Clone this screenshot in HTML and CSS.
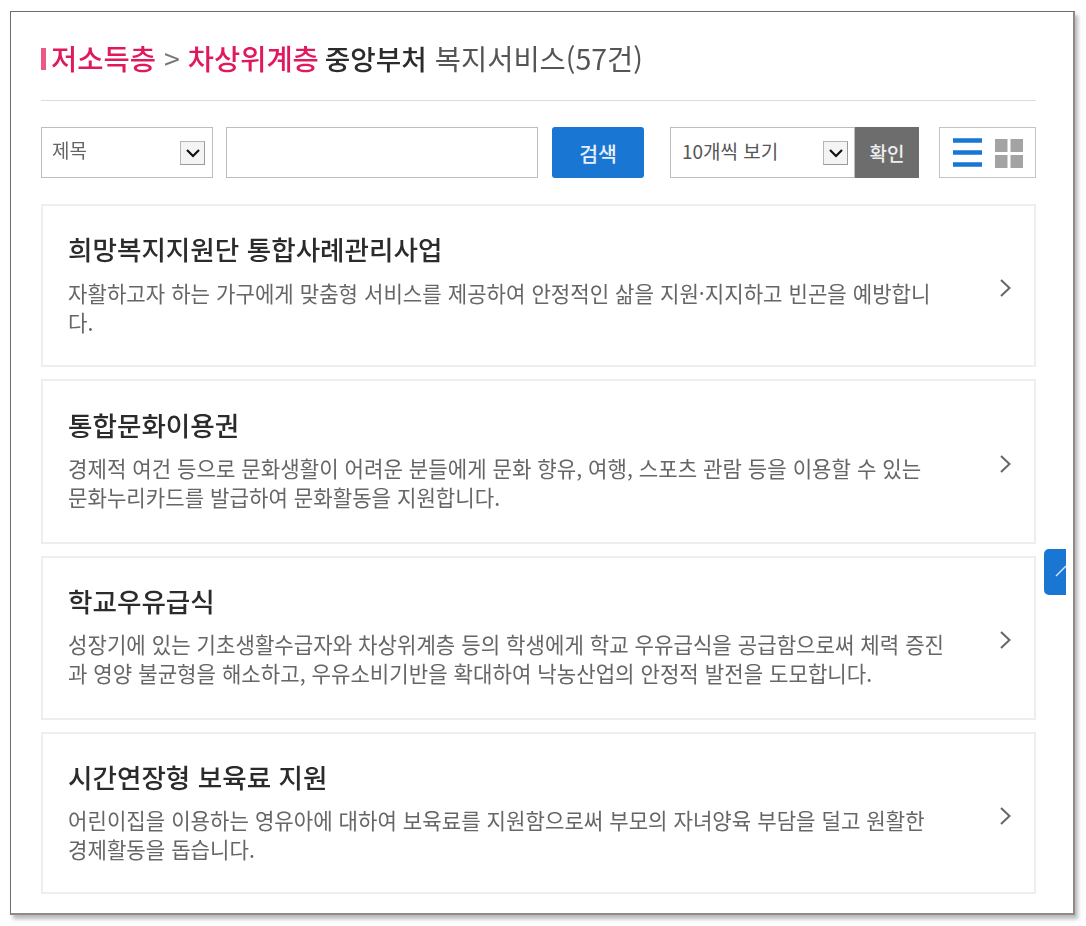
FILE: index.html
```html
<!DOCTYPE html>
<html lang="ko">
<head>
<meta charset="utf-8">
<title>복지서비스</title>
<link rel="stylesheet" href="styles.css">
</head>
<body>
<main class="window">
  <h1 class="heading"><span class="bar"></span><span class="pink">저소득층</span> <span class="gt">&gt;</span> <span class="pink">차상위계층</span> <span class="dark">중앙부처</span> <span class="light">복지서비스(57건)</span></h1>
  <form class="toolbar">
    <div class="select select-field">
      <span>제목</span>
      <span class="arrow"><svg width="14" height="10" viewBox="0 0 14 10"><path d="M1 2l6 6 6-6" fill="none" stroke="#111" stroke-width="2.200"/></svg></span>
    </div>
    <input class="search-input" type="text" aria-label="검색어">
    <button class="search-btn" type="button">검색</button>
    <div class="pager">
      <div class="select select-count">
        <span>10개씩 보기</span>
        <span class="arrow"><svg width="14" height="10" viewBox="0 0 14 10"><path d="M1 2l6 6 6-6" fill="none" stroke="#111" stroke-width="2.200"/></svg></span>
      </div>
      <button class="ok-btn" type="button">확인</button>
    </div>
    <div class="views">
      <svg class="icon-list" width="29" height="29" viewBox="0 0 29 29"><path d="M0 2.500h29M0 14.500h29M0 26.500h29" stroke="#1976d2" stroke-width="4.500"/></svg>
      <svg class="icon-grid" width="28" height="29" viewBox="0 0 28 29"><path d="M0 0h12.500v13H0zM15.500 0h12.500v13H15.500zM0 16h12.500v13H0zM15.500 16h12.500v13H15.500z" fill="#a3a3a3"/></svg>
    </div>
  </form>
  <ul class="cards">
    <li class="card card-a">
      <div class="card-body">
        <h2>희망복지지원단 통합사례관리사업</h2>
        <p>자활하고자 하는 가구에게 맞춤형 서비스를 제공하여 안정적인 삶을 지원·지지하고 빈곤을 예방합니<br>다.</p>
      </div>
      <svg class="chev" width="13" height="20" viewBox="0 0 13 20"><path d="M2 2l8.500 8-8.500 8" fill="none" stroke="#666" stroke-width="2"/></svg>
    </li>
    <li class="card card-b">
      <div class="card-body">
        <h2>통합문화이용권</h2>
        <p>경제적 여건 등으로 문화생활이 어려운 분들에게 문화 향유, 여행, 스포츠 관람 등을 이용할 수 있는<br>문화누리카드를 발급하여 문화활동을 지원합니다.</p>
      </div>
      <svg class="chev" width="13" height="20" viewBox="0 0 13 20"><path d="M2 2l8.500 8-8.500 8" fill="none" stroke="#666" stroke-width="2"/></svg>
    </li>
    <li class="card card-c">
      <div class="card-body">
        <h2>학교우유급식</h2>
        <p>성장기에 있는 기초생활수급자와 차상위계층 등의 학생에게 학교 우유급식을 공급함으로써 체력 증진<br>과 영양 불균형을 해소하고, 우유소비기반을 확대하여 낙농산업의 안정적 발전을 도모합니다.</p>
      </div>
      <svg class="chev" width="13" height="20" viewBox="0 0 13 20"><path d="M2 2l8.500 8-8.500 8" fill="none" stroke="#666" stroke-width="2"/></svg>
    </li>
    <li class="card card-d">
      <div class="card-body">
        <h2>시간연장형 보육료 지원</h2>
        <p>어린이집을 이용하는 영유아에 대하여 보육료를 지원함으로써 부모의 자녀양육 부담을 덜고 원활한<br>경제활동을 돕습니다.</p>
      </div>
      <svg class="chev" width="13" height="20" viewBox="0 0 13 20"><path d="M2 2l8.500 8-8.500 8" fill="none" stroke="#666" stroke-width="2"/></svg>
    </li>
  </ul>
  <a class="top-btn" href="#" aria-label="맨 위로"><svg width="22" height="46" viewBox="0 0 22 46"><path d="M12 27l10-10" fill="none" stroke="#d5e6f7" stroke-width="1.500"/></svg></a>
</main>
</body>
</html>
```
FILE: styles.css
```css
* { box-sizing: border-box; }
html, body { margin: 0; padding: 0; background: #fff; }
body {
  width: 1086px;
  height: 926px;
  padding: 11px 0 0 10px;
  font-family: "Noto Sans CJK KR", "Noto Sans", sans-serif;
  overflow: hidden;
}
.window {
  position: relative;
  width: 1065px;
  height: 904px;
  padding: 0 37px 0 30px;
  border-style: solid;
  border-width: 1px 2px 2px 1px;
  border-color: #6e6e6e #8c8c8c #8c8c8c #6e6e6e;
  box-shadow: 3px 4px 4px rgba(0, 0, 0, .28);
  background: #fff;
  filter: blur(.35px);
}
.heading {
  display: flex;
  align-items: center;
  gap: 8px;
  height: 89px;
  margin: 0;
  padding-top: 3px;
  border-bottom: 1px solid #dcdcdc;
  font-size: 28.5px;
  font-weight: 400;
  white-space: nowrap;
}
.bar { width: 5px; height: 22px; margin: 3px -3px 0 0; background: #ec5a84; }
.pink { color: #e0195f; font-weight: 500; }
.gt { color: #777; font-weight: 400; }
.dark { margin-left: -2px; color: #2b2b2b; font-size: 27.7px; font-weight: 500; }
.light { color: #555; }
.toolbar { display: flex; align-items: stretch; height: 51px; margin-top: 26px; }
.select {
  display: flex;
  align-items: center;
  justify-content: space-between;
  height: 51px;
  border: 1px solid #bdbdbd;
  background: #fff;
  color: #666;
  font-size: 19px;
}
.select-field { width: 172px; padding: 0 7px 0 10px; }
.select-field span:first-child { transform: translateY(-3px); }
.select-count { width: 185px; padding: 0 6px 0 11px; color: #555; }
.select-count span:first-child { transform: translateY(-2px); }
.arrow {
  display: flex;
  align-items: center;
  justify-content: center;
  width: 25px;
  height: 24px;
  border: 1px solid #b5b5b5;
  border-right-color: #9a9a9a;
  border-bottom-color: #9a9a9a;
  background: #f4f4f4;
}
.search-input { width: 312px; height: 51px; margin-left: 13px; border: 1px solid #bdbdbd; background: #fff; outline: 0; }
.search-btn {
  width: 92px;
  height: 51px;
  margin-left: 14px;
  border: 0;
  border-radius: 3px;
  background: #1976d2;
  color: #e8f1fb;
  font: 500 20.5px "Noto Sans CJK KR", sans-serif;
}
.pager { display: flex; margin-left: 26px; }
.ok-btn {
  width: 64px;
  height: 51px;
  border: 0;
  background: #6d6d6d;
  color: #eee;
  font: 500 19px "Noto Sans CJK KR", sans-serif;
}
.views {
  display: flex;
  align-items: center;
  justify-content: space-between;
  width: 97px;
  height: 51px;
  margin-left: 20px;
  padding: 0 12px 0 13px;
  border: 1px solid #c4c4c4;
}
.icon-list { margin-top: 0; }
.icon-grid { margin-top: 2px; }
.cards { display: flex; flex-direction: column; gap: 12px; margin: 26px 0 0; padding: 0; list-style: none; }
.card {
  display: flex;
  align-items: flex-start;
  justify-content: space-between;
  width: 995px;
  padding: 25px 22px 0 25px;
  border: 2px solid #eeeeee;
}
.card-a { height: 163px; }
.card-b { height: 165px; padding-top: 26px; }
.card-c { height: 164px; }
.card-d { height: 162px; }
.card-body { width: 890px; }
.card h2 { margin: 0; color: #2b2b2b; font-size: 26.6px; font-weight: 500; line-height: 36px; }
.card p { margin: 10px 0 0; color: #666; font-size: 21.15px; line-height: 29px; white-space: nowrap; }
.card-a p { margin-top: 11px; }
.chev { margin-top: 47px; }
.top-btn {
  position: absolute;
  top: 537px;
  left: 1033px;
  width: 22px;
  height: 46px;
  border-radius: 5px 0 0 5px;
  background: #1976d2;
}
```
